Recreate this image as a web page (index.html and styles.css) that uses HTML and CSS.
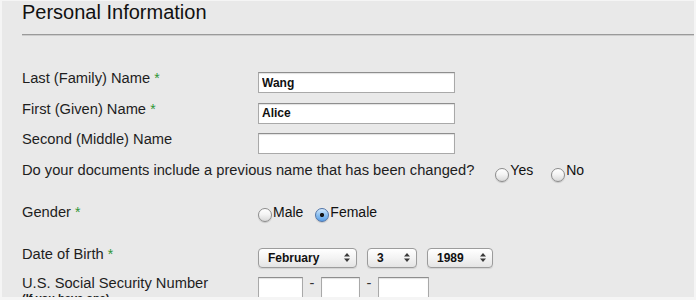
FILE: index.html
```html
<!DOCTYPE html>
<html lang="en">
<head>
    <meta charset="UTF-8">
    <meta name="viewport" content="width=device-width, initial-scale=1.0">
    <title>Personal Information</title>
    <link rel="stylesheet" href="styles.css">
</head>
<body>
    <div class="panel">
        <h2 class="section-title">Personal Information</h2>
        <form class="form">
            <div class="row">
                <label class="field-label" for="lastName">Last (Family) Name <span class="req">*</span></label>
                <input type="text" id="lastName" class="text-input name-input" value="Wang">
            </div>
            <div class="row">
                <label class="field-label" for="firstName">First (Given) Name <span class="req">*</span></label>
                <input type="text" id="firstName" class="text-input name-input" value="Alice">
            </div>
            <div class="row">
                <label class="field-label" for="middleName">Second (Middle) Name</label>
                <input type="text" id="middleName" class="text-input name-input">
            </div>
            <div class="row row-spaced row-question">
                <span class="field-label question">Do your documents include a previous name that has been changed?</span>
                <div class="choices choices-wide">
                    <label class="choice"><input type="radio" class="radio" name="prevName">Yes</label>
                    <label class="choice"><input type="radio" class="radio" name="prevName">No</label>
                </div>
            </div>
            <div class="row row-spaced row-gender">
                <span class="field-label">Gender <span class="req">*</span></span>
                <div class="choices">
                    <label class="choice"><input type="radio" class="radio" name="gender">Male</label>
                    <label class="choice"><input type="radio" class="radio" name="gender" checked>Female</label>
                </div>
            </div>
            <div class="row row-date">
                <span class="field-label">Date of Birth <span class="req">*</span></span>
                <div class="selects">
                    <div class="select select-month">
                        <select name="month">
                            <option>January</option>
                            <option selected>February</option>
                            <option>March</option>
                        </select>
                        <svg class="select-arrows" width="6" height="9" viewBox="0 0 6 9"><path d="M0 3.5L3 0L6 3.5Z M0 5.5L3 9L6 5.5Z" fill="#3a3a3a"/></svg>
                    </div>
                    <div class="select select-day">
                        <select name="day">
                            <option>1</option>
                            <option>2</option>
                            <option selected>3</option>
                        </select>
                        <svg class="select-arrows" width="6" height="9" viewBox="0 0 6 9"><path d="M0 3.5L3 0L6 3.5Z M0 5.5L3 9L6 5.5Z" fill="#3a3a3a"/></svg>
                    </div>
                    <div class="select select-year">
                        <select name="year">
                            <option>1988</option>
                            <option selected>1989</option>
                            <option>1990</option>
                        </select>
                        <svg class="select-arrows" width="6" height="9" viewBox="0 0 6 9"><path d="M0 3.5L3 0L6 3.5Z M0 5.5L3 9L6 5.5Z" fill="#3a3a3a"/></svg>
                    </div>
                </div>
            </div>
            <div class="row row-ssn">
                <label class="field-label" for="ssn1">U.S. Social Security Number<small class="hint">(If you have one)</small></label>
                <div class="ssn">
                    <input type="text" id="ssn1" class="text-input ssn-1">
                    <span class="dash">-</span>
                    <input type="text" class="text-input ssn-2">
                    <span class="dash">-</span>
                    <input type="text" class="text-input ssn-3">
                </div>
            </div>
        </form>
    </div>
</body>
</html>
```

FILE: styles.css
```css
body {
    margin: 0;
    background-color: #f5f5f5;
    font-family: "Liberation Sans", Arial, sans-serif;
    color: #1e1e1e;
}
.panel {
    width: 692px;
    height: 296px;
    margin: 1px 0 0 2px;
    padding-left: 20px;
    box-sizing: border-box;
    background-color: #e9e9e9;
    overflow: hidden;
}
.section-title {
    margin: 0;
    padding-bottom: 10px;
    font-size: 20px;
    font-weight: normal;
    line-height: 23px;
    color: #111;
    border-bottom: 1px solid #9a9a9a;
    box-shadow: 0 1px 0 #cdcdcd;
}
.form {
    margin-top: 35px;
}
.row {
    display: flex;
    align-items: flex-start;
    height: 30.5px;
}
.row-spaced {
    height: 42px;
}
.row-date {
    height: 29px;
}
.row-ssn {
    height: auto;
}
.field-label {
    flex: none;
    width: 236px;
    font-size: 14.7px;
    line-height: 17px;
}
.question {
    width: auto;
}
.req {
    color: #2f9535;
    font-size: 14px;
}
.hint {
    display: block;
    font-size: 11px;
    font-weight: bold;
    line-height: 12px;
}
.text-input {
    box-sizing: border-box;
    height: 21px;
    margin: 2px 0 0 0;
    padding: 0 3px;
    font-family: "Liberation Sans", Arial, sans-serif;
    font-size: 12px;
    font-weight: bold;
    color: #111;
    background-color: #fff;
    border: 1px solid #a9a9a9;
    border-top-color: #8e8e8e;
    border-radius: 0;
    box-shadow: inset 0 1px 1px rgba(0, 0, 0, 0.12);
    outline: none;
}
.name-input {
    width: 197px;
}
.choices {
    display: flex;
}
.choices-wide {
    margin-left: 21px;
}
.choice {
    display: flex;
    align-items: flex-start;
    font-size: 14px;
    line-height: 17px;
    color: #111;
}
.choice + .choice {
    margin-left: 12px;
}
.choices-wide .choice + .choice {
    margin-left: 18px;
}
.radio {
    appearance: none;
    width: 14px;
    height: 14px;
    margin: 4px 1px 0 0;
    border: 1px solid #8c8c8c;
    border-radius: 50%;
    background: linear-gradient(#ffffff, #f4f4f4 45%, #d9d9d9);
    box-shadow: 0 1px 1px rgba(0, 0, 0, 0.15);
}
.row-question .radio {
    margin-top: 6.5px;
}
.radio:checked {
    border-color: #4f74a8;
    background: radial-gradient(circle, #151515 0, #151515 1.8px, transparent 2.4px),
        linear-gradient(#d3e8fb, #8cc0f0 50%, #5b9fe6);
}
.selects {
    display: flex;
    gap: 10px;
    margin-top: 2px;
}
.select {
    position: relative;
}
.select select {
    appearance: none;
    box-sizing: border-box;
    height: 20px;
    margin: 0;
    padding: 0 0 0 9px;
    font-family: "Liberation Sans", Arial, sans-serif;
    font-size: 12px;
    font-weight: bold;
    color: #111;
    background: linear-gradient(#ffffff, #f3f3f3 50%, #e4e4e4);
    border: 1px solid #9c9c9c;
    border-radius: 4px;
    box-shadow: 0 1px 1px rgba(0, 0, 0, 0.1);
    outline: none;
}
.select-month select {
    width: 99px;
}
.select-day select {
    width: 50px;
}
.select-year select {
    width: 66px;
}
.select-arrows {
    position: absolute;
    top: 5.5px;
    right: 7px;
    pointer-events: none;
}
.ssn {
    display: flex;
    align-items: flex-start;
}
.ssn .text-input {
    margin-top: 2.5px;
}
.ssn-1 {
    width: 45px;
}
.ssn-2 {
    width: 39px;
}
.ssn-3 {
    width: 51px;
}
.dash {
    width: 18px;
    text-align: center;
    font-size: 14.7px;
    line-height: 17px;
    color: #333;
}
```
